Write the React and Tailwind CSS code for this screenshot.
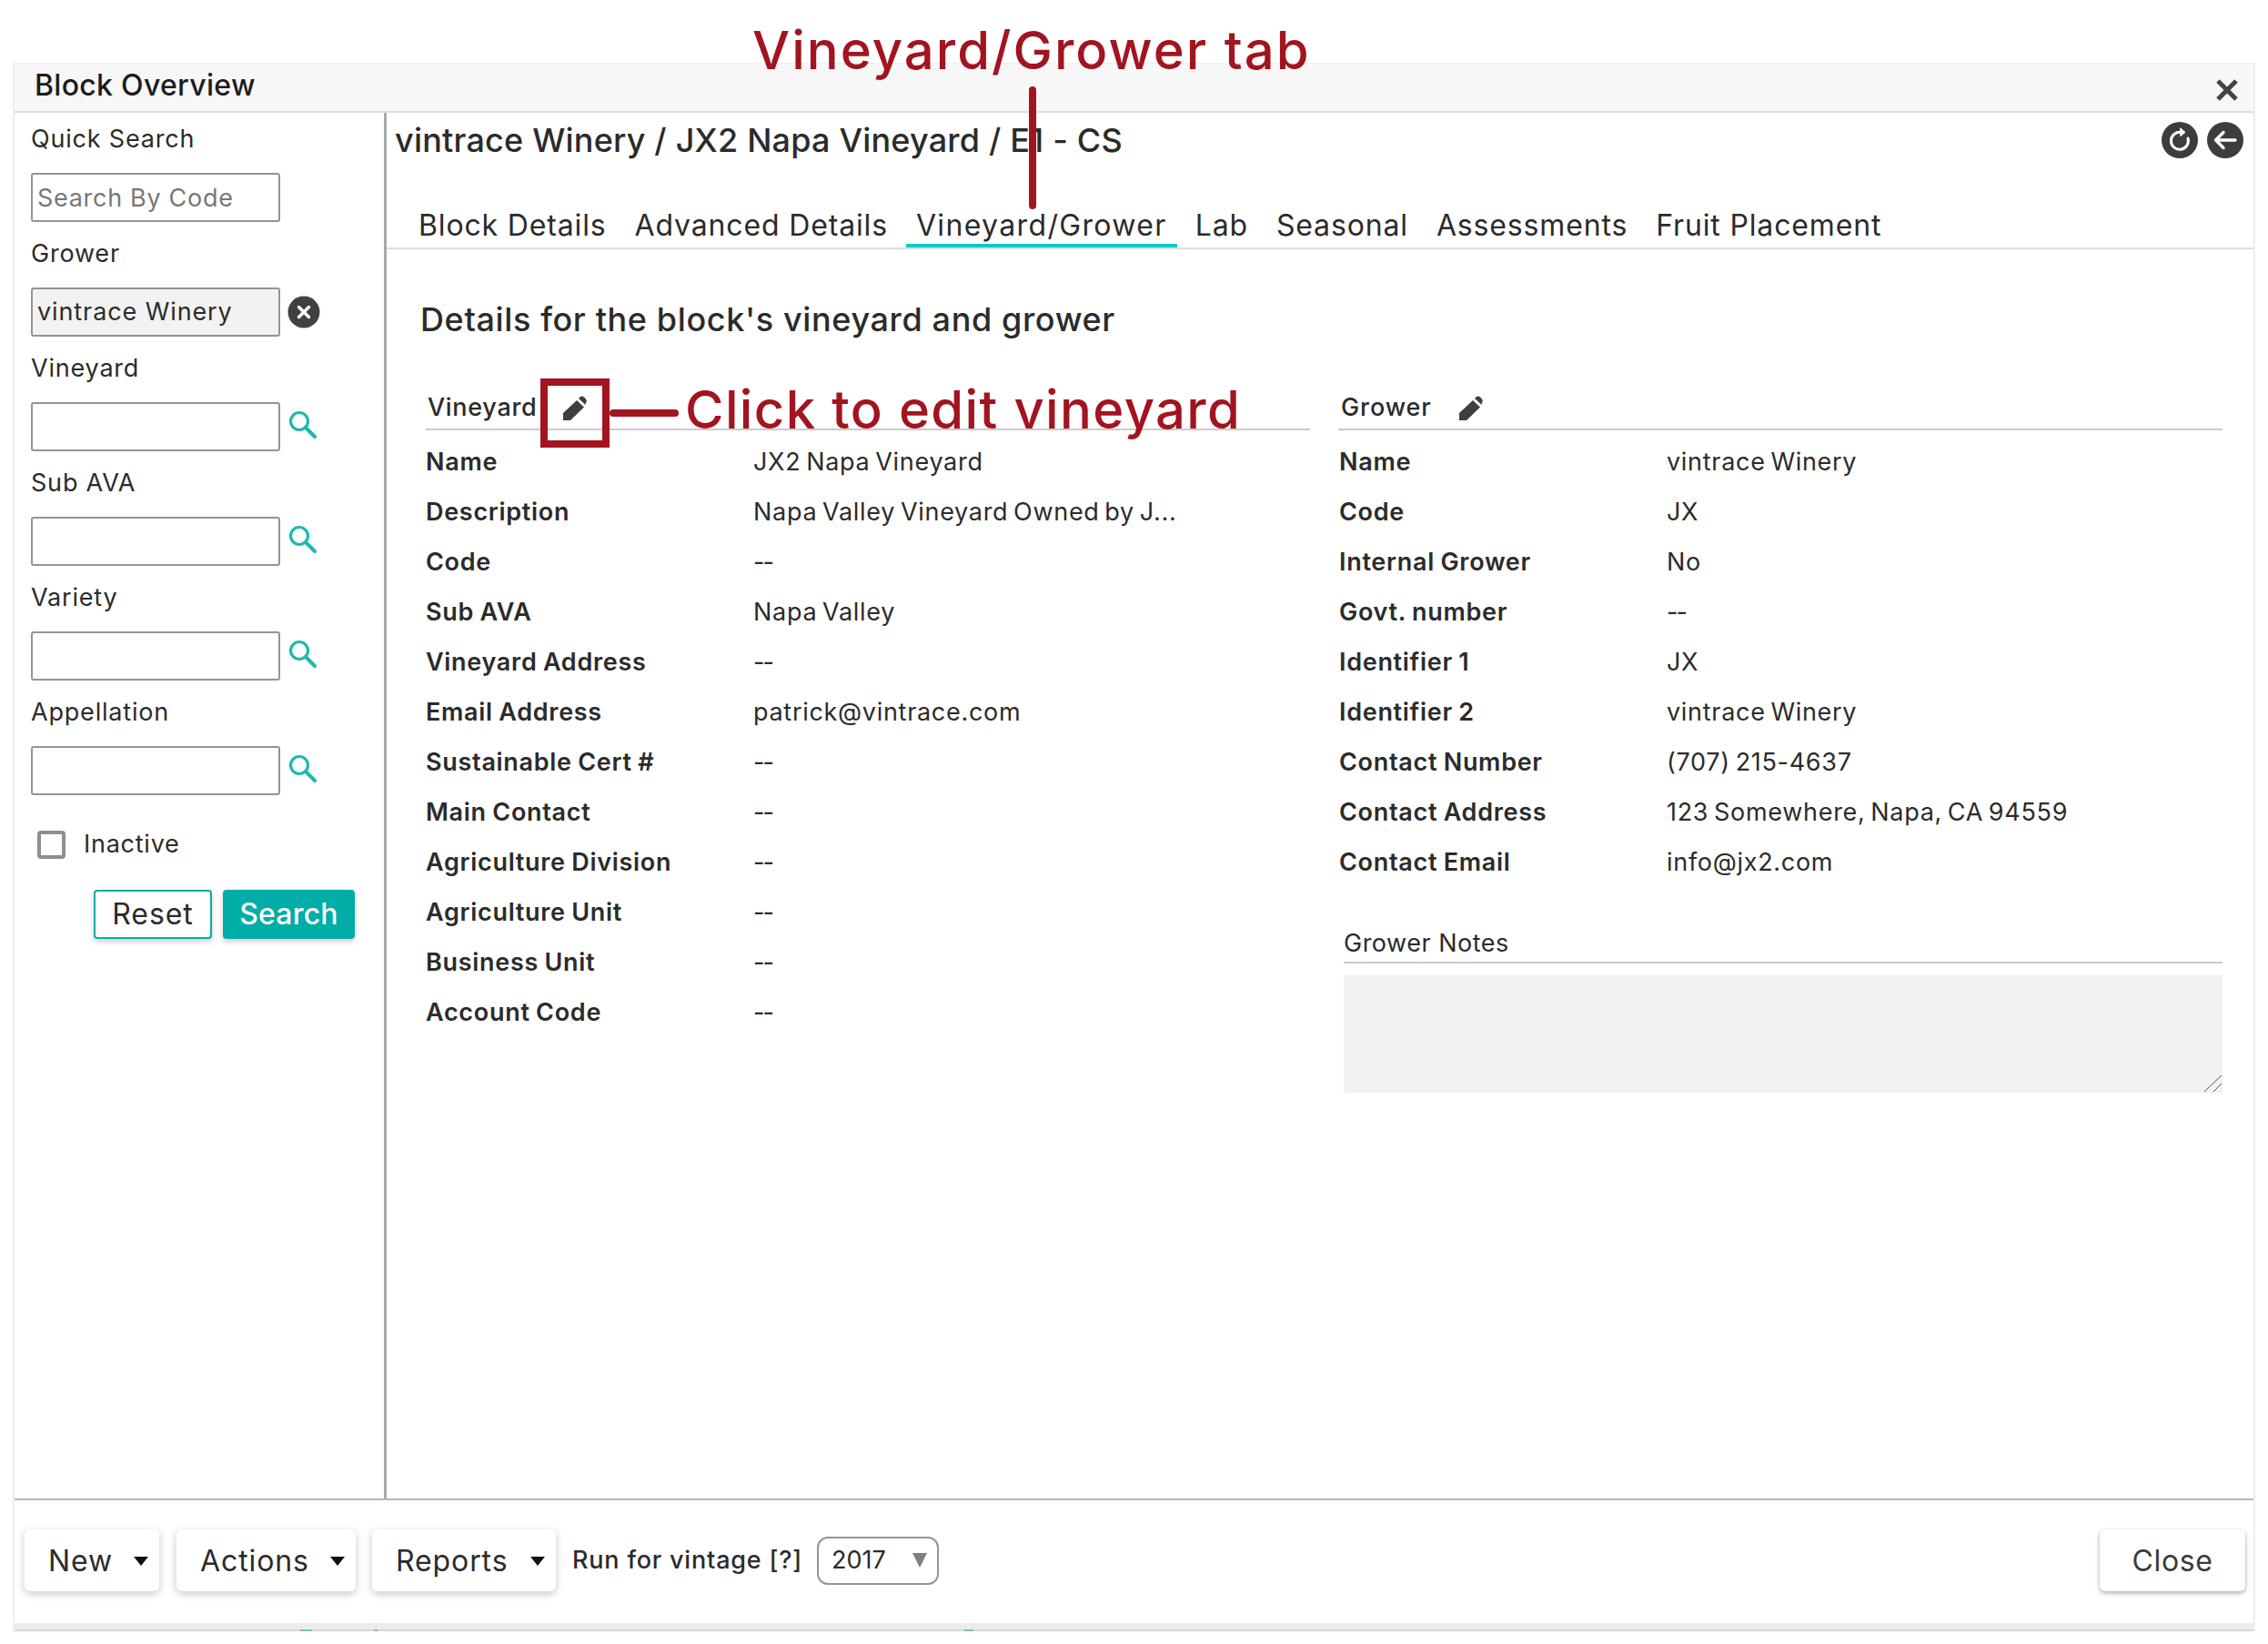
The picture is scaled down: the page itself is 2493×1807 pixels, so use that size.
import { useState } from "react";

const vineyardRows = [
    ["Name", "JX2 Napa Vineyard"],
    ["Description", "Napa Valley Vineyard Owned by J..."],
    ["Code", "--"],
    ["Sub AVA", "Napa Valley"],
    ["Vineyard Address", "--"],
    ["Email Address", "patrick@vintrace.com"],
    ["Sustainable Cert #", "--"],
    ["Main Contact", "--"],
    ["Agriculture Division", "--"],
    ["Agriculture Unit", "--"],
    ["Business Unit", "--"],
    ["Account Code", "--"],
];

const growerRows = [
    ["Name", "vintrace Winery"],
    ["Code", "JX"],
    ["Internal Grower", "No"],
    ["Govt. number", "--"],
    ["Identifier 1", "JX"],
    ["Identifier 2", "vintrace Winery"],
    ["Contact Number", "(707) 215-4637"],
    ["Contact Address", "123 Somewhere, Napa, CA 94559"],
    ["Contact Email", "info@jx2.com"],
];

const tabs = ["Block Details", "Advanced Details", "Vineyard/Grower", "Lab", "Seasonal", "Assessments", "Fruit Placement"];

const PencilIcon = () => (
    <svg width="30" height="30" viewBox="0 0 30 30" fill="#3f3f3f">
        <path d="M3 28 L3 20 L18 6 L26 13.5 L11 28 Z" />
        <path d="M20 4 L22 2 Q24 1 26 2.5 L28 4.5 Q29.5 6.5 28 8.5 L27.5 11 Z" />
    </svg>
);

const SearchIcon = () => (
    <svg width="32" height="32" viewBox="0 0 32 32" fill="none" stroke="#1eb8b0" strokeLinecap="round" className="-mt-[4px]">
        <circle cx="12" cy="12" r="9.5" strokeWidth="3.2" />
        <path d="M19 19 L29 29" strokeWidth="4" />
    </svg>
);

const Caret = () => <span className="ml-auto w-0 h-0 border-x-[8px] border-x-transparent border-t-[10px] border-t-[#111]" />;

const Field = ({ label, value, icon }) => (
    <div>
        <div className="h-[36px] leading-[36px] mb-[19px] text-[27px] tracking-[0.8px]">{label}</div>
        <div className="flex items-center gap-[9px]">
            {value}
            {icon}
        </div>
    </div>
);

const TextBox = ({ placeholder }) => (
    <input
        type="text"
        placeholder={placeholder}
        className="w-[274px] h-[54px] px-[5px] border-2 border-[#949494] rounded-[3px] text-[27px] tracking-[0.7px] outline-none placeholder:text-[#777]"
    />
);

const DetailRow = ({ label, value }) => (
    <div className="flex items-center h-[55px] text-[27px]">
        <div className="w-[360px] font-semibold tracking-[0.7px] [word-spacing:-1px]">{label}</div>
        <div className={value === "--" ? "tracking-[-2px]" : "tracking-[0.7px] [word-spacing:-2.5px]"}>{value}</div>
    </div>
);

const MenuButton = ({ label, width }) => (
    <button className={`${width} flex items-center h-[68px] pt-[1px] pl-[26px] pr-[12px] bg-white rounded-[6px] shadow-[0_3px_10px_rgba(0,0,0,0.22)] text-[32px] tracking-[0.9px]`}>
        {label}
        <Caret />
    </button>
);

const App = () => {
    const [tab] = useState("Vineyard/Grower");
    return (
        <div className="relative w-[2493px] h-[1807px] bg-white pt-[69px] text-[#2b2b2b] [font-family:Inter,sans-serif] overflow-hidden">
            {/* window */}
            <div className="ml-[14px] w-[2465px] flex flex-col border-x-2 border-[#eeeeee]">
                <div className="flex items-center justify-between h-[55px] pl-[22px] pr-[16px] bg-[#f7f7f7] border-t border-b-2 border-t-[#eeeeee] border-b-[#dddddd]">
                    <span className="-mt-[5px] text-[32px] font-medium tracking-[0.3px] text-[#1c1c1c]">Block Overview</span>
                    <svg width="26" height="26" viewBox="0 0 26 26" stroke="#444" strokeWidth="5" className="mt-[6px]">
                        <path d="M3 3 L23 23 M23 3 L3 23" />
                    </svg>
                </div>

                <div className="flex h-[1523px]">
                    {/* search panel */}
                    <div className="w-[409px] shrink-0 pl-[18px] pt-[11px] border-r-[3px] border-[#a9a9a9]">
                        <div className="flex flex-col gap-[17px]">
                            <Field label="Quick Search" value={<TextBox placeholder="Search By Code" />} />
                            <Field
                                label="Grower"
                                value={
                                    <div className="w-[274px] h-[54px] flex items-center px-[5px] border-2 border-[#949494] rounded-[3px] bg-[#f2f2f2] text-[27px] tracking-[0.9px]">
                                        vintrace Winery
                                    </div>
                                }
                                icon={
                                    <svg width="36" height="36" viewBox="0 0 36 36" stroke="#fff" strokeWidth="3.4" strokeLinecap="round" className="-ml-[1px]">
                                        <circle cx="18" cy="18" r="17.5" fill="#404040" stroke="none" />
                                        <path d="M12.5 12.5 L23.5 23.5 M23.5 12.5 L12.5 23.5" />
                                    </svg>
                                }
                            />
                            <Field label="Vineyard" value={<TextBox />} icon={<SearchIcon />} />
                            <Field label="Sub AVA" value={<TextBox />} icon={<SearchIcon />} />
                            <Field label="Variety" value={<TextBox />} icon={<SearchIcon />} />
                            <Field label="Appellation" value={<TextBox />} icon={<SearchIcon />} />
                        </div>
                        <div className="flex items-center mt-[39px] ml-[7px] h-[31px]">
                            <span className="w-[31px] h-[31px] border-4 border-[#8f8f8f] rounded-[4px]" />
                            <span className="ml-[20px] text-[27px] tracking-[0.75px]">Inactive</span>
                        </div>
                        <div className="flex gap-[12px] mt-[34px] ml-[69px]">
                            <button className="w-[130px] h-[54px] border-2 border-[#00ada7] rounded-[4px] bg-white text-[32px] tracking-[0.9px] shadow-[0_3px_6px_rgba(0,0,0,0.2)]">
                                Reset
                            </button>
                            <button className="w-[145px] h-[54px] rounded-[4px] bg-[#00ada7] text-white font-medium text-[32px] tracking-[0.2px] shadow-[0_3px_6px_rgba(0,0,0,0.2)]">
                                Search
                            </button>
                        </div>
                    </div>

                    {/* block details */}
                    <div className="flex-1 min-w-0">
                        <div className="flex items-center justify-between h-[60px] pl-[9px] pr-[11px]">
                            <span className="text-[36px] font-medium tracking-[0.2px]">vintrace Winery / JX2 Napa Vineyard / E1 - CS</span>
                            <div className="flex gap-[10px]">
                                <svg width="40" height="40" viewBox="0 0 40 40" fill="none" stroke="#fff" strokeWidth="3" strokeLinecap="round">
                                    <circle cx="20" cy="20" r="20" fill="#3d3d3d" stroke="none" />
                                    <path d="M22 11.5 A9.5 9.5 0 1 0 29 18" />
                                    <path d="M21 7 L26 11.5 L21 15.5 Z" fill="#fff" strokeWidth="1" />
                                </svg>
                                <svg width="40" height="40" viewBox="0 0 40 40" fill="none" stroke="#fff" strokeWidth="3.4" strokeLinecap="round" strokeLinejoin="round">
                                    <circle cx="20" cy="20" r="20" fill="#3d3d3d" stroke="none" />
                                    <path d="M31 20 H10 M18 11.5 L9.5 20 L18 28.5" />
                                </svg>
                            </div>
                        </div>
                        <div className="flex items-end h-[90px] pl-[24px] gap-[9px] border-b-2 border-[#dddddd]">
                            {tabs.map((name) => (
                                <div
                                    key={name}
                                    className={`h-[48px] px-[11px] text-[32px] ${
                                        name === tab ? "border-b-4 border-[#00cccc] tracking-[1.35px]" : "tracking-[0.85px]"
                                    }`}
                                >
                                    {name}
                                </div>
                            ))}
                        </div>

                        <div className="pl-[37px] pt-[53px] text-[36px] font-medium tracking-[0.63px] leading-[48px]">
                            Details for the block's vineyard and grower
                        </div>

                        <div className="flex gap-[31px] pl-[43px] mt-[49px]">
                            <div className="w-[972px]">
                                <div className="flex items-center gap-[26px] h-[49px] pl-[2px] pt-[2px] border-b-2 border-[#cccccc] text-[27px] font-medium tracking-[0.7px]">
                                    Vineyard
                                    <PencilIcon />
                                </div>
                                <div className="mt-[8px]">
                                    {vineyardRows.map(([label, value]) => (
                                        <DetailRow key={label} label={label} value={value} />
                                    ))}
                                </div>
                            </div>
                            <div className="w-[972px]">
                                <div className="flex items-center gap-[27px] h-[49px] pl-[3px] pt-[2px] border-b-2 border-[#cccccc] text-[27px] font-medium tracking-[0.9px]">
                                    Grower
                                    <PencilIcon />
                                </div>
                                <div className="mt-[8px] pl-[1px]">
                                    {growerRows.map(([label, value]) => (
                                        <DetailRow key={label} label={label} value={value} />
                                    ))}
                                </div>
                                <div className="ml-[6px] mt-[38px]">
                                    <div className="h-[45px] border-b-2 border-[#cccccc] text-[27px] tracking-[0.5px] leading-[45px]">Grower Notes</div>
                                    <div className="relative h-[129px] mt-[13px] bg-[#f2f2f2]">
                                        <svg width="22" height="22" viewBox="0 0 22 22" stroke="#555" strokeWidth="1" className="absolute right-0 bottom-0">
                                            <path d="M2 21 L21 3 M12 21 L21 12" />
                                        </svg>
                                    </div>
                                </div>
                            </div>
                        </div>
                    </div>
                </div>

                {/* bottom bar */}
                <div className="flex items-center h-[137px] pb-[3px] pl-[11px] pr-[9px] border-t-2 border-[#b8b8b8]">
                    <MenuButton label="New" width="w-[148px]" />
                    <div className="w-[19px]" />
                    <MenuButton label="Actions" width="w-[197px]" />
                    <div className="w-[18px]" />
                    <MenuButton label="Reports" width="w-[202px]" />
                    <span className="ml-[18px] text-[27px] font-medium tracking-[0.8px]">Run for vintage [?]</span>
                    <div className="flex items-center w-[134px] h-[53px] ml-[16px] pl-[14px] pr-[11px] border-2 border-[#949494] rounded-[12px] text-[27px]">
                        2017
                        <span className="ml-auto w-0 h-0 border-x-[8px] border-x-transparent border-t-[16px] border-t-[#808080]" />
                    </div>
                    <button className="ml-auto w-[160px] h-[68px] pt-[1px] bg-white rounded-[6px] shadow-[0_2px_5px_rgba(0,0,0,0.35)] text-[32px] tracking-[0.6px] text-[#3a3a3a]">
                        Close
                    </button>
                </div>
                <div className="h-[7px] bg-[#ececec]" />
                <div className="relative h-[2px] bg-[#d8d8d8]">
                    <span className="absolute left-[314px] top-0 w-[13px] h-[2px] bg-[#7fbcbc]" />
                    <span className="absolute left-[395px] top-0 w-[4px] h-[2px] bg-[#7fbcbc]" />
                    <span className="absolute left-[1044px] top-0 w-[10px] h-[2px] bg-[#7fbcbc]" />
                </div>
            </div>

            {/* red annotations */}
            <div className="absolute left-[827px] top-[18px] text-[58px] font-medium leading-[74px] tracking-[2.05px] text-[#a2141f]">Vineyard/Grower tab</div>
            <div className="absolute left-[1131px] top-[95px] w-[8px] h-[135px] rounded-full bg-[#a2141f]" />
            <div className="absolute left-[594px] top-[416px] w-[76px] h-[76px] border-[8px] border-[#a2141f]" />
            <div className="absolute left-[670px] top-[450px] w-[76px] h-[8px] rounded-full bg-[#a2141f]" />
            <div className="absolute left-[753px] top-[413px] text-[58px] font-medium leading-[74px] tracking-[1.35px] text-[#a2141f]">Click to edit vineyard</div>
        </div>
    );
};

export default App;
